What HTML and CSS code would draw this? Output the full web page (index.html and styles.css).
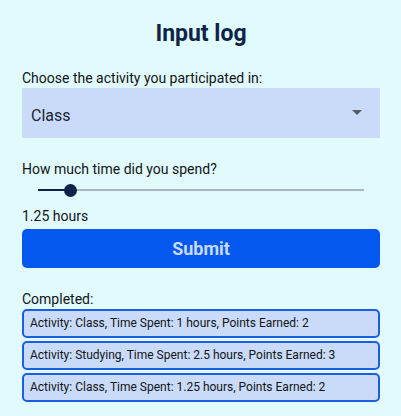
FILE: index.html
```html
<!DOCTYPE html>
<html lang="en">
<head>
    <meta charset="UTF-8">
    <meta name="viewport" content="width=device-width, initial-scale=1.0">
    <title>Input log</title>
    <link rel="stylesheet" href="styles.css">
</head>
<body>
    <main class="log">
        <h1 class="title">Input log</h1>

        <label class="label" for="activity">Choose the activity you participated in:</label>
        <div class="select">
            <span>Class</span>
            <svg class="caret" width="10" height="5" viewBox="0 0 10 5"><path d="M0 0h10L5 5z" fill="#555d66"/></svg>
        </div>

        <label class="label time-label" for="time">How much time did you spend?</label>
        <input id="time" class="slider" type="range" min="0" max="15" step="0.25" value="1.25" style="--fill: 8.33%">
        <div class="hours">1.25 hours</div>

        <button class="submit">Submit</button>

        <div class="label done-label">Completed:</div>
        <ul class="entries">
            <li>Activity: Class, Time Spent: 1 hours, Points Earned: 2</li>
            <li>Activity: Studying, Time Spent: 2.5 hours, Points Earned: 3</li>
            <li>Activity: Class, Time Spent: 1.25 hours, Points Earned: 2</li>
        </ul>
    </main>
</body>
</html>
```

FILE: styles.css
```css
:root {
    --bg: #e1fafc;
    --navy: #0f2247;
    --field: #c9dbf8;
    --blue: #0458ef;
    --text: #111418;
}

body {
    margin: 0;
    background: var(--bg);
    color: var(--text);
    font-family: Roboto, 'Noto Sans', sans-serif;
}

.log {
    display: flex;
    flex-direction: column;
    padding: 0 21px 0 22px;
}

.title {
    margin: 20px 0 22px;
    text-align: center;
    font-size: 23px;
    font-weight: 700;
    color: var(--navy);
}

.label {
    font-size: 14px;
    line-height: 18px;
}

.select {
    display: flex;
    justify-content: space-between;
    align-items: center;
    height: 50px;
    margin-top: 1px;
    padding: 4px 18px 0 9px;
    box-sizing: border-box;
    background: var(--field);
    color: #1d2433;
    font-size: 16px;
}

.caret {
    margin-top: -6px;
}

.time-label {
    margin-top: 22px;
}

/* Slider */
.slider {
    -webkit-appearance: none;
    appearance: none;
    margin: 4px 16px 0;
    height: 16px;
    background: transparent;
}

.slider::-webkit-slider-runnable-track {
    height: 2px;
    background: linear-gradient(to right, var(--navy) 0 calc(6.5px + var(--fill) * 0.96), #a9b6c4 0);
}

.slider::-webkit-slider-thumb {
    -webkit-appearance: none;
    width: 13px;
    height: 13px;
    margin-top: -5.5px;
    border-radius: 50%;
    background: var(--navy);
}

.hours {
    margin-top: 9px;
    font-size: 14px;
    line-height: 18px;
}

.submit {
    height: 39px;
    margin-top: 4px;
    border: none;
    border-radius: 5px;
    background: var(--blue);
    color: #c8dafc;
    font-family: inherit;
    font-size: 18px;
    font-weight: 700;
}

.done-label {
    margin-top: 22px;
}

.entries {
    display: flex;
    flex-direction: column;
    gap: 3px;
    margin: 1px 0 0;
    padding: 0;
    list-style: none;
}

.entries li {
    height: 25px;
    padding: 0 6px;
    border: 2px solid #1b5fe0;
    border-radius: 5px;
    background: var(--field);
    font-size: 12px;
    line-height: 25px;
}
```
